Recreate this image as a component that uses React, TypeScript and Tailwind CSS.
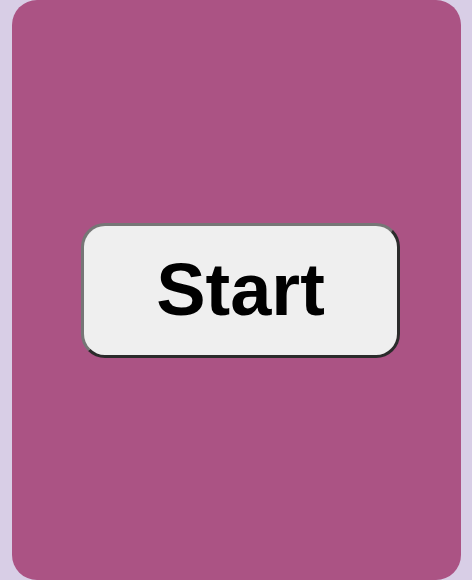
import React from "react";

export default function App() {
  return (
    <div className="w-[472px] h-[580px] bg-[#d8cee6] pl-3 pr-[11px] flex">
      <div className="flex-1 h-full rounded-[25px] bg-[#ab5384] flex items-center justify-center">
        <button
          className="ml-2 w-[319px] h-[135px] rounded-[24px] bg-[#efefef] border-[3px] border-t-[#767676] border-l-[#767676] border-b-[#2b2b2b] border-r-[#2b2b2b] flex items-center justify-center text-black font-bold text-[74px] leading-none"
          style={{ fontFamily: '"Liberation Sans", Arial, sans-serif' }}
        >
          Start
        </button>
      </div>
    </div>
  );
}
